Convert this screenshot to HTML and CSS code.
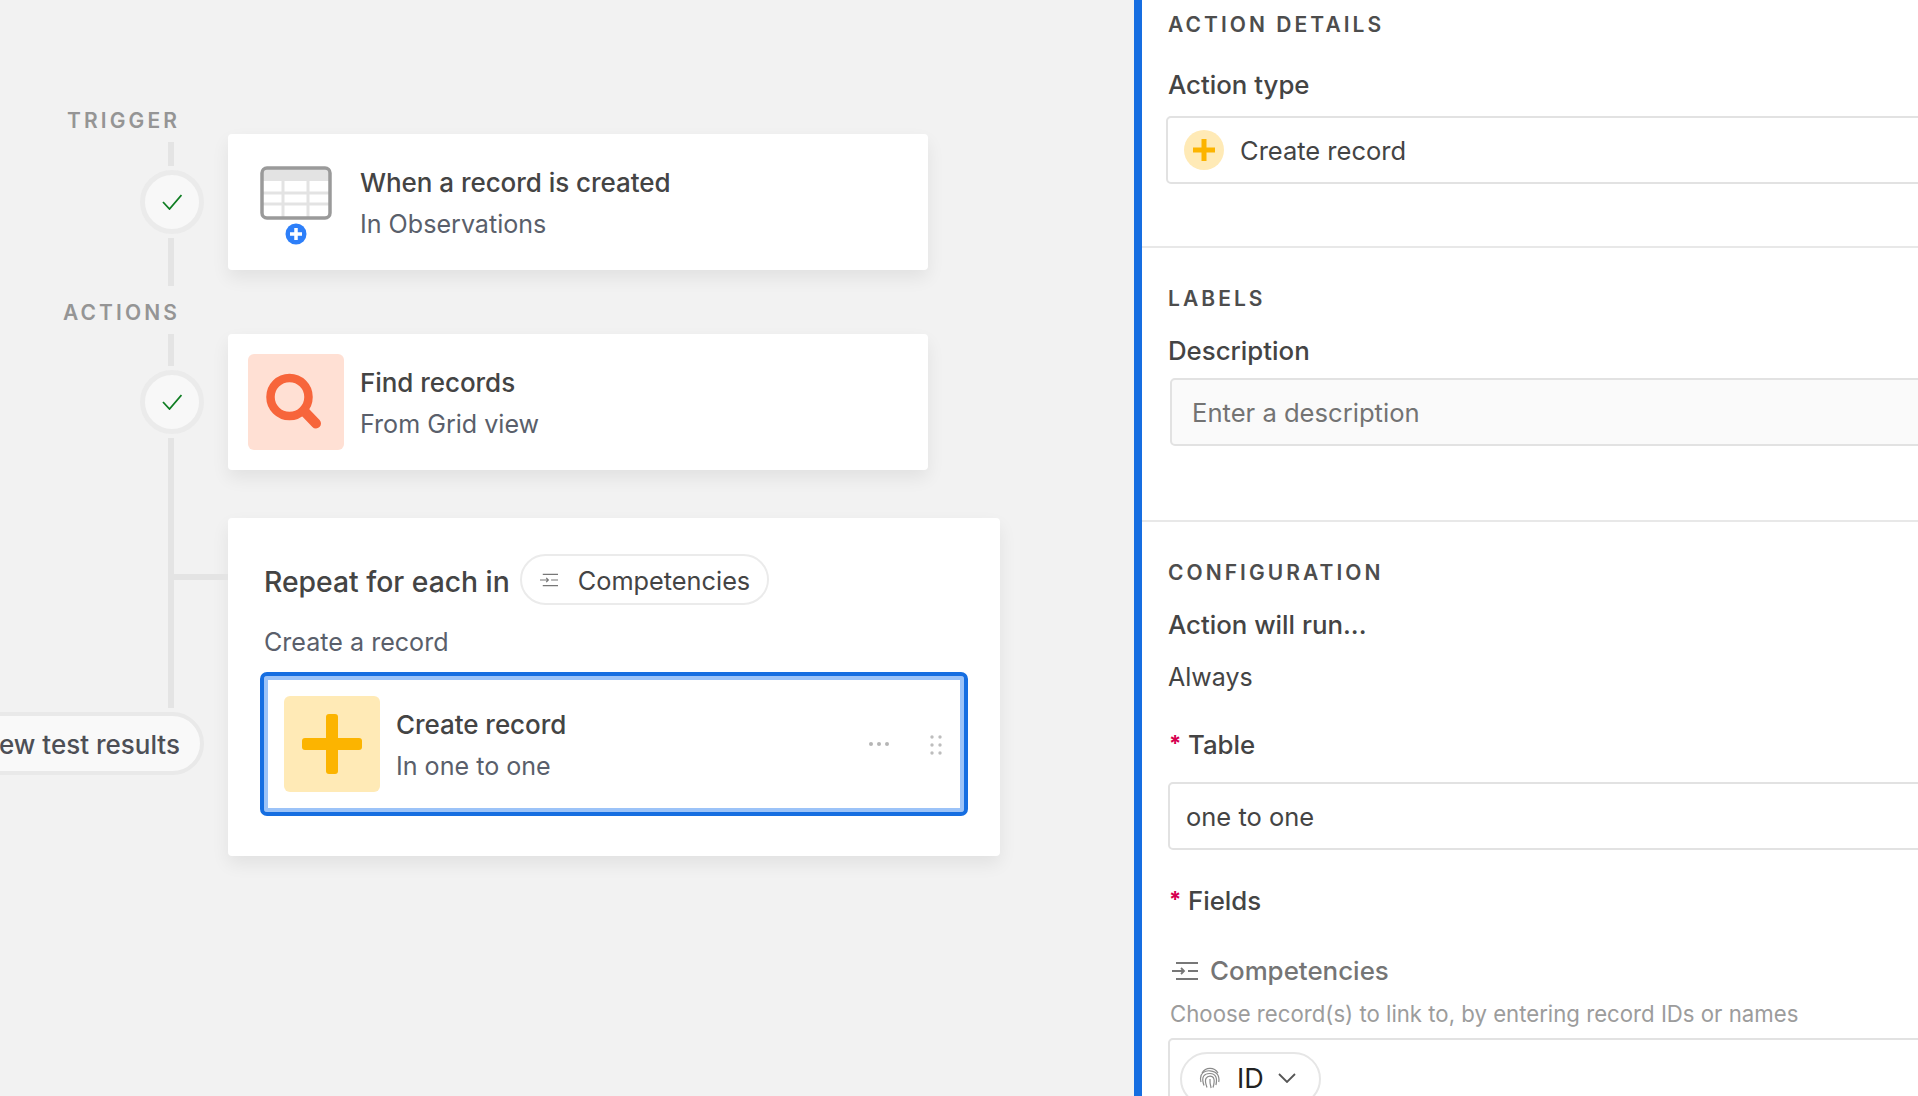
FILE: index.html
```html
<!DOCTYPE html>
<html lang="en">
<head>
<meta charset="utf-8">
<title>Automation action</title>
<link rel="stylesheet" href="styles.css">
</head>
<body>
<div class="app">
  <main class="canvas">
    <div class="rail">
      <div class="rail-label label-trigger">TRIGGER</div>
      <div class="line seg-a"></div>
      <div class="status"><svg class="check" viewBox="0 0 20 16"><path d="M1 8l6.500 7L19.500 1"/></svg></div>
      <div class="line seg-b"></div>
      <div class="rail-label label-actions">ACTIONS</div>
      <div class="line seg-c"></div>
      <div class="status"><svg class="check" viewBox="0 0 20 16"><path d="M1 8l6.500 7L19.500 1"/></svg></div>
      <div class="line seg-d"><div class="branch"></div></div>
      <div class="pill-wrap"><div class="results-pill">View test results</div></div>
    </div>
    <div class="flow">
      <section class="card">
        <svg class="table-icon" viewBox="0 0 72 80">
          <rect class="t-fill" x="2" y="2" width="68" height="50" rx="5"/>
          <path class="t-head" d="M3 7a4 4 0 0 1 4-4h58a4 4 0 0 1 4 4v8H3z"/>
          <path class="t-grid" d="M3 27h66M3 38h66M23 15v36M48 15v36"/>
          <rect class="t-frame" x="2" y="2" width="68" height="50" rx="5"/>
          <circle class="t-add" cx="36" cy="68" r="10.500"/>
          <path class="t-plus" d="M36 62v12M30 68h12"/>
        </svg>
        <div class="card-text">
          <div class="card-title">When a record is created</div>
          <div class="card-sub">In Observations</div>
        </div>
      </section>
      <section class="card card-two">
        <div class="tile tile-red">
          <svg class="tile-svg" viewBox="0 0 96 96"><circle class="mag" cx="41.500" cy="43" r="19"/><path class="mag-handle" d="M56 57l12 12.500"/></svg>
        </div>
        <div class="card-text">
          <div class="card-title">Find records</div>
          <div class="card-sub">From Grid view</div>
        </div>
      </section>
      <section class="loop">
        <div class="loop-head">
          <span class="loop-title">Repeat for each in</span>
          <span class="chip">
            <svg class="lookup chip-icon" viewBox="0 0 26 18"><path d="M4 1h22M16 9h10M4 17h22M0 9h12M9 6l3 3-3 3"/></svg>
            <span class="chip-text">Competencies</span>
          </span>
        </div>
        <div class="loop-sub">Create a record</div>
        <div class="selected">
          <div class="tile tile-yellow">
            <svg class="tile-svg" viewBox="0 0 96 96"><rect class="big-plus" x="18" y="42" width="60" height="12" rx="3"/><rect class="big-plus" x="42" y="18" width="12" height="60" rx="3"/></svg>
          </div>
          <div class="card-text">
            <div class="card-title">Create record</div>
            <div class="card-sub">In one to one</div>
          </div>
          <svg class="dots" viewBox="0 0 20 4"><circle cx="2" cy="2" r="2"/><circle cx="10" cy="2" r="2"/><circle cx="18" cy="2" r="2"/></svg>
          <svg class="grip" viewBox="0 0 12 20"><circle cx="2" cy="2" r="1.700"/><circle cx="10" cy="2" r="1.700"/><circle cx="2" cy="10" r="1.700"/><circle cx="10" cy="10" r="1.700"/><circle cx="2" cy="18" r="1.700"/><circle cx="10" cy="18" r="1.700"/></svg>
        </div>
      </section>
    </div>
  </main>
  <aside class="panel">
    <section class="sec sec-one">
      <h2 class="sec-title">ACTION DETAILS</h2>
      <div class="field-label l-type">Action type</div>
      <div class="box select">
        <span class="dot-icon"><svg viewBox="0 0 26 26"><path class="small-plus" d="M13 2v22M2 13h22"/></svg></span>
        <span class="value">Create record</span>
      </div>
    </section>
    <section class="sec sec-two">
      <h2 class="sec-title">LABELS</h2>
      <div class="field-label l-desc">Description</div>
      <div class="box desc">Enter a description</div>
    </section>
    <section class="sec sec-three">
      <h2 class="sec-title">CONFIGURATION</h2>
      <div class="field-label l-run">Action will run...</div>
      <div class="value l-always">Always</div>
      <div class="field-label l-table"><span class="req">*</span>Table</div>
      <div class="box table-input"><span class="value">one to one</span></div>
      <div class="field-label l-fields"><span class="req">*</span>Fields</div>
      <div class="field-name"><svg class="lookup name-icon" viewBox="0 0 26 18"><path d="M4 1h22M16 9h10M4 17h22M0 9h12M9 6l3 3-3 3"/></svg>Competencies</div>
      <div class="help">Choose record(s) to link to, by entering record IDs or names</div>
      <div class="box token-box">
        <div class="token">
          <svg class="finger" viewBox="0 0 22 22">
            <path d="M3 6C4.800 3 7.600 1.400 11 1.400S17.200 3 19 6"/>
            <path d="M2 15C1 11 1.600 7.600 4 5.600 6 4 8.400 3.600 11 3.800c3.500.2 6.500 1.500 8 4.500 1 2.100 1.200 4.500.7 6.700"/>
            <path d="M5 18.500C3.600 14.500 3.300 11 4.700 9 6.200 7 8.500 6.400 11 6.500c2.600.1 4.800 1.100 5.800 3.200 1 2.100.8 5.300.1 8.300"/>
            <path d="M8 20.500C6.500 16.500 5.800 13.500 7 11.400 8 9.700 9.500 9.200 11 9.200s3.200.8 3.800 2.400c.7 2 .2 5.700-.8 8.900"/>
            <path d="M11 12c-.3 3 .2 6 1.100 9"/>
          </svg>
          <span class="token-text">ID</span>
          <svg class="chev" viewBox="0 0 18 10"><path d="M1 1l8 8 8-8"/></svg>
        </div>
      </div>
    </section>
  </aside>
</div>
</body>
</html>
```
FILE: styles.css
```css
* { box-sizing: border-box; }
html, body { margin: 0; height: 100%; overflow: hidden; }
body { font-family: Inter, "Liberation Sans", sans-serif; color: #444; background: #f2f2f2; }
.app { display: flex; width: 1918px; height: 1096px; overflow: hidden; }

.canvas { width: 1134px; flex: none; display: flex; background: #f2f2f2; }
.rail { width: 228px; flex: none; display: flex; flex-direction: column; align-items: flex-start; }
.rail-label { width: 180px; text-align: right; font-size: 21px; line-height: 24px; font-weight: 600; letter-spacing: 3.100px; color: #959595; white-space: nowrap; }
.label-trigger { margin-top: 109px; }
.label-actions { margin-top: 15px; }
.line { width: 6px; margin-left: 168px; background: #e4e4e4; position: relative; }
.seg-a { height: 24px; margin-top: 9px; }
.seg-b { height: 48px; }
.seg-c { height: 32px; margin-top: 9px; }
.seg-d { height: 270px; }
.branch { position: absolute; left: 6px; top: 136px; width: 54px; height: 6px; background: #e4e4e4; }
.status { width: 64px; height: 64px; margin: 4px 0 4px 140px; border-radius: 50%; border: 5px solid #ebebeb; background: #f8f8f8; display: flex; align-items: center; justify-content: center; }
.check { width: 20px; height: 16px; fill: none; stroke: #0f7d22; stroke-width: 1.800; }
.pill-wrap { width: 204px; margin-top: 4px; display: flex; justify-content: flex-end; }
.results-pill { flex: none; height: 63px; padding: 2px 20px 0 22px; border: 4px solid #e9e9e9; border-radius: 32px; background: #f9f9f9; display: flex; align-items: center; font-size: 26px; font-weight: 500; color: #4d4f56; white-space: nowrap; }

.flow { flex: 1; padding-top: 134px; }
.card { width: 700px; height: 136px; background: #fff; border-radius: 4px; box-shadow: 0 8px 18px rgba(0,0,0,.07); display: flex; align-items: center; padding-left: 32px; margin-bottom: 64px; }
.card-two { padding-left: 20px; margin-bottom: 48px; }
.card-text { margin-left: 16px; padding-top: 2px; }
.card-title { font-size: 26px; line-height: 34px; font-weight: 500; letter-spacing: -0.05px; color: #444; white-space: nowrap; }
.card-sub { font-size: 25.100px; line-height: 34px; margin-top: 7px; color: #5a5f6b; white-space: nowrap; }
.table-icon { width: 72px; height: 80px; flex: none; margin-top: 8px; margin-right: 12px; }
.t-fill { fill: #fff; }
.t-head { fill: #e3e3e3; }
.t-grid { fill: none; stroke: #e3e3e3; stroke-width: 3; }
.t-frame { fill: none; stroke: #9a9a9a; stroke-width: 3.500; }
.t-add { fill: #2d7ff9; }
.t-plus { fill: none; stroke: #fff; stroke-width: 3.500; }
.tile { width: 96px; height: 96px; flex: none; border-radius: 6px; }
.tile-red { background: #ffe0d4; }
.tile-yellow { background: #ffeab6; }
.tile-svg { width: 96px; height: 96px; display: block; }
.mag { fill: none; stroke: #f7653b; stroke-width: 8.500; }
.mag-handle { fill: none; stroke: #f7653b; stroke-width: 10; stroke-linecap: round; }
.big-plus { fill: #fcb400; }

.loop { width: 772px; height: 338px; background: #fff; border-radius: 4px; box-shadow: 0 8px 18px rgba(0,0,0,.07); padding: 36px 32px 0 32px; }
.loop-head { display: flex; align-items: flex-start; gap: 10px; margin-left: 4px; }
.loop-title { font-size: 28.300px; line-height: 51px; padding-top: 3px; font-weight: 500; color: #444; white-space: nowrap; }
.chip { height: 51px; padding: 0 17px 0 18px; border: 2px solid #ebebeb; border-radius: 26px; display: flex; align-items: center; font-size: 25.300px; color: #444; white-space: nowrap; }
.chip-text { padding-top: 2px; }
.lookup { fill: none; stroke: #777; stroke-width: 1.800; flex: none; }
.chip-icon { width: 18px; height: 14px; margin-right: 20px; }
.loop-sub { margin: 17px 0 0 4px; font-size: 25.100px; line-height: 34px; color: #5a5f6b; }
.selected { width: 708px; height: 144px; margin-top: 13px; border: 4px solid #166ee1; border-radius: 7px; box-shadow: inset 0 0 0 4px #9cc3f8; background: #fff; display: flex; align-items: center; padding-left: 20px; position: relative; }
.dots { position: absolute; left: 605px; top: 66px; width: 20px; height: 4px; fill: #b5b5b5; }
.grip { position: absolute; left: 666px; top: 59px; width: 12px; height: 20px; fill: #bdbdbd; }

.panel { flex: 1; min-width: 0; border-left: 8px solid #166ee1; background: #fff; overflow: hidden; }
.sec { padding-left: 26px; width: 1000px; border-bottom: 2px solid #e8e8e8; }
.sec-one { padding-top: 13px; height: 248px; }
.sec-two { padding-top: 39px; height: 274px; }
.sec-three { padding-top: 39px; border-bottom: 0; }
.sec-title { margin: 0; font-size: 21px; line-height: 24px; font-weight: 600; letter-spacing: 3.050px; color: #4d4d4d; }
.field-label { font-size: 25.800px; line-height: 32px; font-weight: 500; color: #444; display: flex; align-items: center; }
.value { font-size: 25.500px; line-height: 32px; color: #444; }
.box { border: 2px solid #e2e2e2; border-radius: 5px; background: #fff; }
.l-type { margin-top: 32px; }
.select { height: 68px; margin: 15px 0 0 -2px; display: flex; align-items: center; padding-left: 16px; }
.select .value { padding-top: 2px; }
.dot-icon { width: 40px; height: 40px; border-radius: 50%; background: #ffeab6; display: flex; align-items: center; justify-content: center; margin-right: 16px; }
.dot-icon svg { width: 26px; height: 26px; }
.small-plus { fill: none; stroke: #fcb400; stroke-width: 5; }
.l-desc { margin-top: 24px; }
.desc { height: 68px; margin: 11px 0 0 2px; background: #fafafa; display: flex; align-items: center; padding-left: 20px; font-size: 25.600px; color: #737373; }
.l-run { margin-top: 24px; }
.l-always { margin-top: 20px; font-size: 25px; }
.l-table { margin-top: 36px; }
.req { color: #d6004f; font-size: 22px; width: 19px; margin-left: 1px; margin-top: -5px; flex: none; font-weight: 700; }
.table-input { height: 68px; margin-top: 21px; display: flex; align-items: center; padding-left: 16px; }
.table-input .value { padding-top: 2px; }
.l-fields { margin-top: 35px; }
.field-name { margin: 38px 0 0 4px; display: flex; align-items: center; font-size: 25.900px; line-height: 32px; font-weight: 500; color: #757575; }
.name-icon { width: 26px; height: 18px; margin-right: 12px; }
.help { margin: 13px 0 0 2px; font-size: 22.200px; line-height: 28px; color: #9c9c9c; }
.token-box { margin-top: 10px; height: 100px; padding: 12px 0 0 10px; border-radius: 5px 5px 0 0; }
.token { width: 141px; height: 54px; border: 2px solid #e6e6e6; border-radius: 27px; display: flex; align-items: center; padding: 0 0 2px 17px; }
.finger { width: 22px; height: 22px; fill: none; stroke: #8a8a8a; stroke-width: 1.200; flex: none; }
.token-text { margin-left: 16px; font-size: 27px; color: #222; }
.chev { width: 18px; height: 10px; margin-left: 14px; fill: none; stroke: #555; stroke-width: 1.800; flex: none; }
```
